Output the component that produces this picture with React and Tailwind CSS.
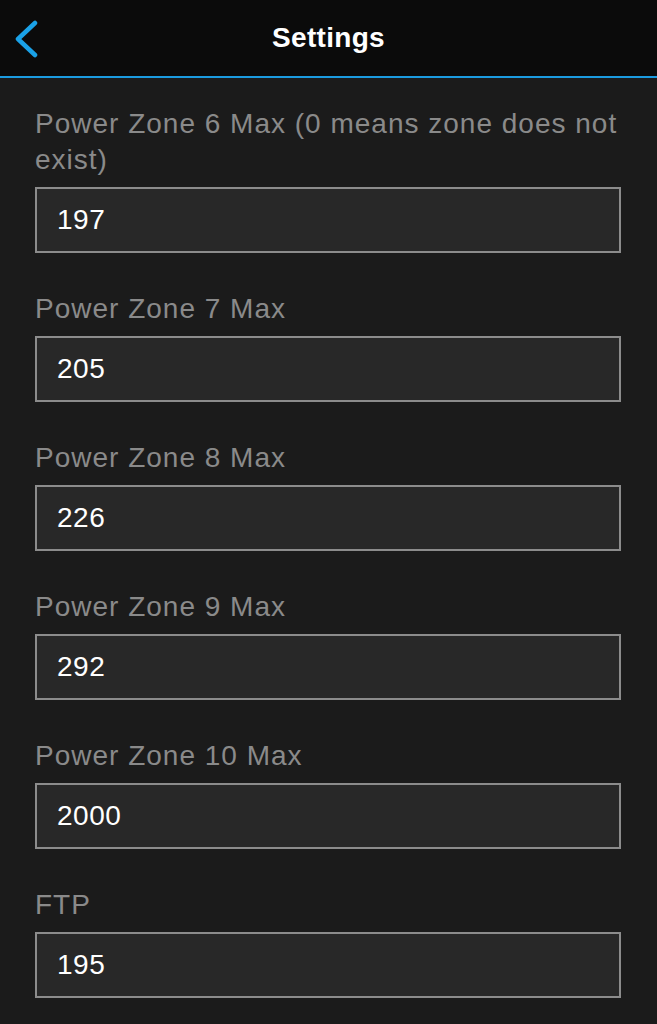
const fields = [
  { label: "Power Zone 6 Max (0 means zone does not exist)", value: "197" },
  { label: "Power Zone 7 Max", value: "205" },
  { label: "Power Zone 8 Max", value: "226" },
  { label: "Power Zone 9 Max", value: "292" },
  { label: "Power Zone 10 Max", value: "2000" },
  { label: "FTP", value: "195" },
];

export default function App() {
  return (
    <div className="min-h-[1024px] w-full bg-[#1b1b1b] font-[family-name:Liberation_Sans,Arial,sans-serif]">
      {/* Header */}
      <div className="relative flex h-[78px] items-center justify-center border-b-2 border-[#1b9be0] bg-[#0b0b0b]">
        <button className="absolute left-[13px] top-[20px]">
          <svg width="28" height="38" viewBox="0 0 28 38" fill="none">
            <path d="M22 3 L5 19 L22 35" stroke="#1aa2e8" strokeWidth="4.5" strokeLinecap="round" strokeLinejoin="round" />
          </svg>
        </button>
        <h1 className="text-[28px] font-bold text-white tracking-[0.3px]">Settings</h1>
      </div>

      {/* Fields */}
      <div className="flex flex-col gap-[38px] pl-[35px] pr-[36px] pt-[28px] pb-[26px]">
        {fields.map((f) => (
          <div key={f.label} className="flex flex-col gap-[9px]">
            <label className="text-[28px] leading-[36px] tracking-[1px] text-[#8a8a8a]">{f.label}</label>
            <div className="flex h-[66px] items-center border-2 border-[#8c8c8c] bg-[#282828] pl-[20px]">
              <span className="text-[28px] tracking-[0.5px] text-white">{f.value}</span>
            </div>
          </div>
        ))}
      </div>
    </div>
  );
}
